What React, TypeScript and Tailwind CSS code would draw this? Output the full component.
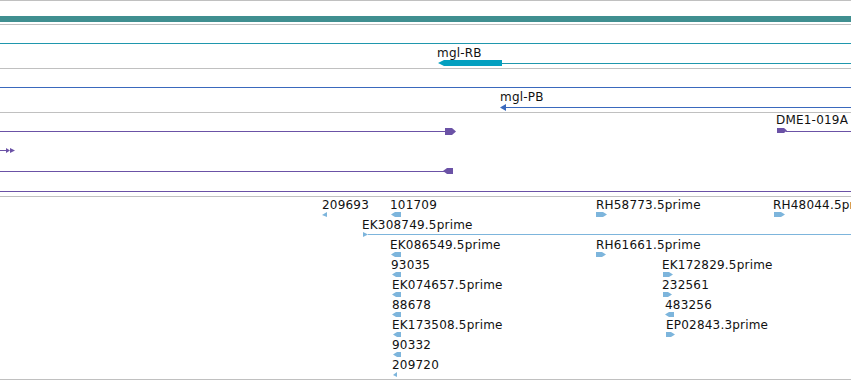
const FONT = { fontFamily: '"DejaVu Sans", Verdana, sans-serif' };

const EST = '#7db5dc';
const PURPLE = '#6b52a6';
const BLUE = '#3a69bd';

type Dir = 'left' | 'right' | 'smallLeft' | 'smallRight';

interface Est {
  label: string;
  labelX: number;
  x: number;
  w: number;
  dir: Dir;
  line?: boolean;
}

// one array per row of the EST track, 20px apart
const estRows: Est[][] = [
  [
    { label: '209693', labelX: 322, x: 322, w: 5, dir: 'smallLeft' },
    { label: '101709', labelX: 390, x: 391, w: 10, dir: 'left' },
    { label: 'RH58773.5prime', labelX: 596, x: 596, w: 11, dir: 'right' },
    { label: 'RH48044.5prime', labelX: 773, x: 774, w: 11, dir: 'right' },
  ],
  [{ label: 'EK308749.5prime', labelX: 362, x: 363, w: 5, dir: 'smallRight', line: true }],
  [
    { label: 'EK086549.5prime', labelX: 390, x: 391, w: 10, dir: 'left' },
    { label: 'RH61661.5prime', labelX: 596, x: 596, w: 10, dir: 'right' },
  ],
  [
    { label: '93035', labelX: 391, x: 392, w: 9, dir: 'left' },
    { label: 'EK172829.5prime', labelX: 662, x: 663, w: 10, dir: 'right' },
  ],
  [
    { label: 'EK074657.5prime', labelX: 392, x: 392, w: 9, dir: 'left' },
    { label: '232561', labelX: 662, x: 663, w: 9, dir: 'right' },
  ],
  [
    { label: '88678', labelX: 392, x: 392, w: 9, dir: 'left' },
    { label: '483256', labelX: 665, x: 665, w: 9, dir: 'left' },
  ],
  [
    { label: 'EK173508.5prime', labelX: 392, x: 393, w: 8, dir: 'left' },
    { label: 'EP02843.3prime', labelX: 666, x: 666, w: 9, dir: 'right' },
  ],
  [{ label: '90332', labelX: 392, x: 393, w: 8, dir: 'left' }],
  [{ label: '209720', labelX: 392, x: 393, w: 4, dir: 'smallLeft' }],
];

function glyphPoints(x: number, y: number, w: number, dir: Dir) {
  const h = 5;
  const m = y + h / 2;
  switch (dir) {
    case 'left':
      return `${x},${m} ${x + 4},${y} ${x + w},${y} ${x + w},${y + h} ${x + 4},${y + h}`;
    case 'right':
      return `${x},${y} ${x + w - 4},${y} ${x + w},${m} ${x + w - 4},${y + h} ${x},${y + h}`;
    case 'smallLeft':
      return `${x},${m + 0.5} ${x + w},${y} ${x + w},${y + h}`;
    case 'smallRight':
      return `${x},${y} ${x + w},${m} ${x},${y + h}`;
  }
}

function Label({ x, y, children }: { x: number; y: number; children: React.ReactNode }) {
  return (
    <span
      className="absolute whitespace-nowrap text-[12px] leading-[14px] tracking-[0.2px] text-[#111]"
      style={{ left: x, top: y }}
    >
      {children}
    </span>
  );
}

export default function App() {
  return (
    <div className="flex flex-col w-[851px] h-[380px] overflow-hidden bg-white" style={FONT}>
      {/* overview strip */}
      <div className="flex flex-col justify-end h-[24px] pb-[2px] border-t border-[#c0c0c0]">
        <div className="h-[6px] bg-[#408f90]" />
      </div>

      {/* mgl-RB */}
      <div className="relative h-[44px] shrink-0 border-t border-[#c0c0c0]">
        <svg className="absolute inset-0" width="851" height="43">
          <rect x="0" y="18" width="851" height="1" fill="#1f97ad" />
          <polygon points="438,38 444,35 502,35 502,41 444,41" fill="#04a0c0" />
          <rect x="502" y="38" width="349" height="1" fill="#1f97ad" />
        </svg>
        <Label x={437} y={21}>mgl-RB</Label>
      </div>

      {/* mgl-PB */}
      <div className="relative h-[44px] shrink-0 border-t border-[#c0c0c0]">
        <svg className="absolute inset-0" width="851" height="43">
          <rect x="0" y="18" width="851" height="1" fill={BLUE} />
          <polygon points="500,38.5 506,35 506,42" fill={BLUE} />
          <rect x="505" y="38" width="346" height="1" fill={BLUE} />
        </svg>
        <Label x={500} y={21}>mgl-PB</Label>
      </div>

      {/* repeat features */}
      <div className="relative h-[84px] shrink-0 border-t border-[#c0c0c0]">
        <svg className="absolute inset-0" width="851" height="83">
          <rect x="0" y="18" width="446" height="1" fill={PURPLE} />
          <polygon points="445,15 452,15 456,18.5 452,22 445,22" fill={PURPLE} />
          <polygon points="777,15 784,15 787,17.5 784,20 777,20" fill={PURPLE} />
          <rect x="786" y="18" width="65" height="1" fill={PURPLE} />
          <rect x="0" y="37" width="7" height="1" fill={PURPLE} />
          <polygon points="6,35 10,37.5 6,40" fill={PURPLE} />
          <polygon points="10,35 15,37.5 10,40" fill={PURPLE} />
          <rect x="0" y="58" width="445" height="1" fill={PURPLE} />
          <polygon points="443,58 447,55 453,55 453,61 447,61" fill={PURPLE} />
          <rect x="0" y="78" width="851" height="1" fill={PURPLE} />
        </svg>
        <Label x={776} y={0}>DME1-019A</Label>
      </div>

      {/* ESTs */}
      <div className="flex flex-col h-[184px] shrink-0 border-y border-[#c0c0c0] pt-px">
        {estRows.map((row, i) => (
          <div key={i} className="relative h-[20px] shrink-0">
            <svg className="absolute inset-0 overflow-visible" width="851" height="20">
              {row.map((f) => (
                <g key={f.label}>
                  {f.line && <rect x={f.x + f.w} y="16" width={851 - f.x - f.w} height="1" fill={EST} />}
                  <polygon points={glyphPoints(f.x, 14, f.w, f.dir)} fill={EST} />
                </g>
              ))}
            </svg>
            {row.map((f) => (
              <Label key={f.label} x={f.labelX} y={0}>
                {f.label}
              </Label>
            ))}
          </div>
        ))}
      </div>
    </div>
  );
}
